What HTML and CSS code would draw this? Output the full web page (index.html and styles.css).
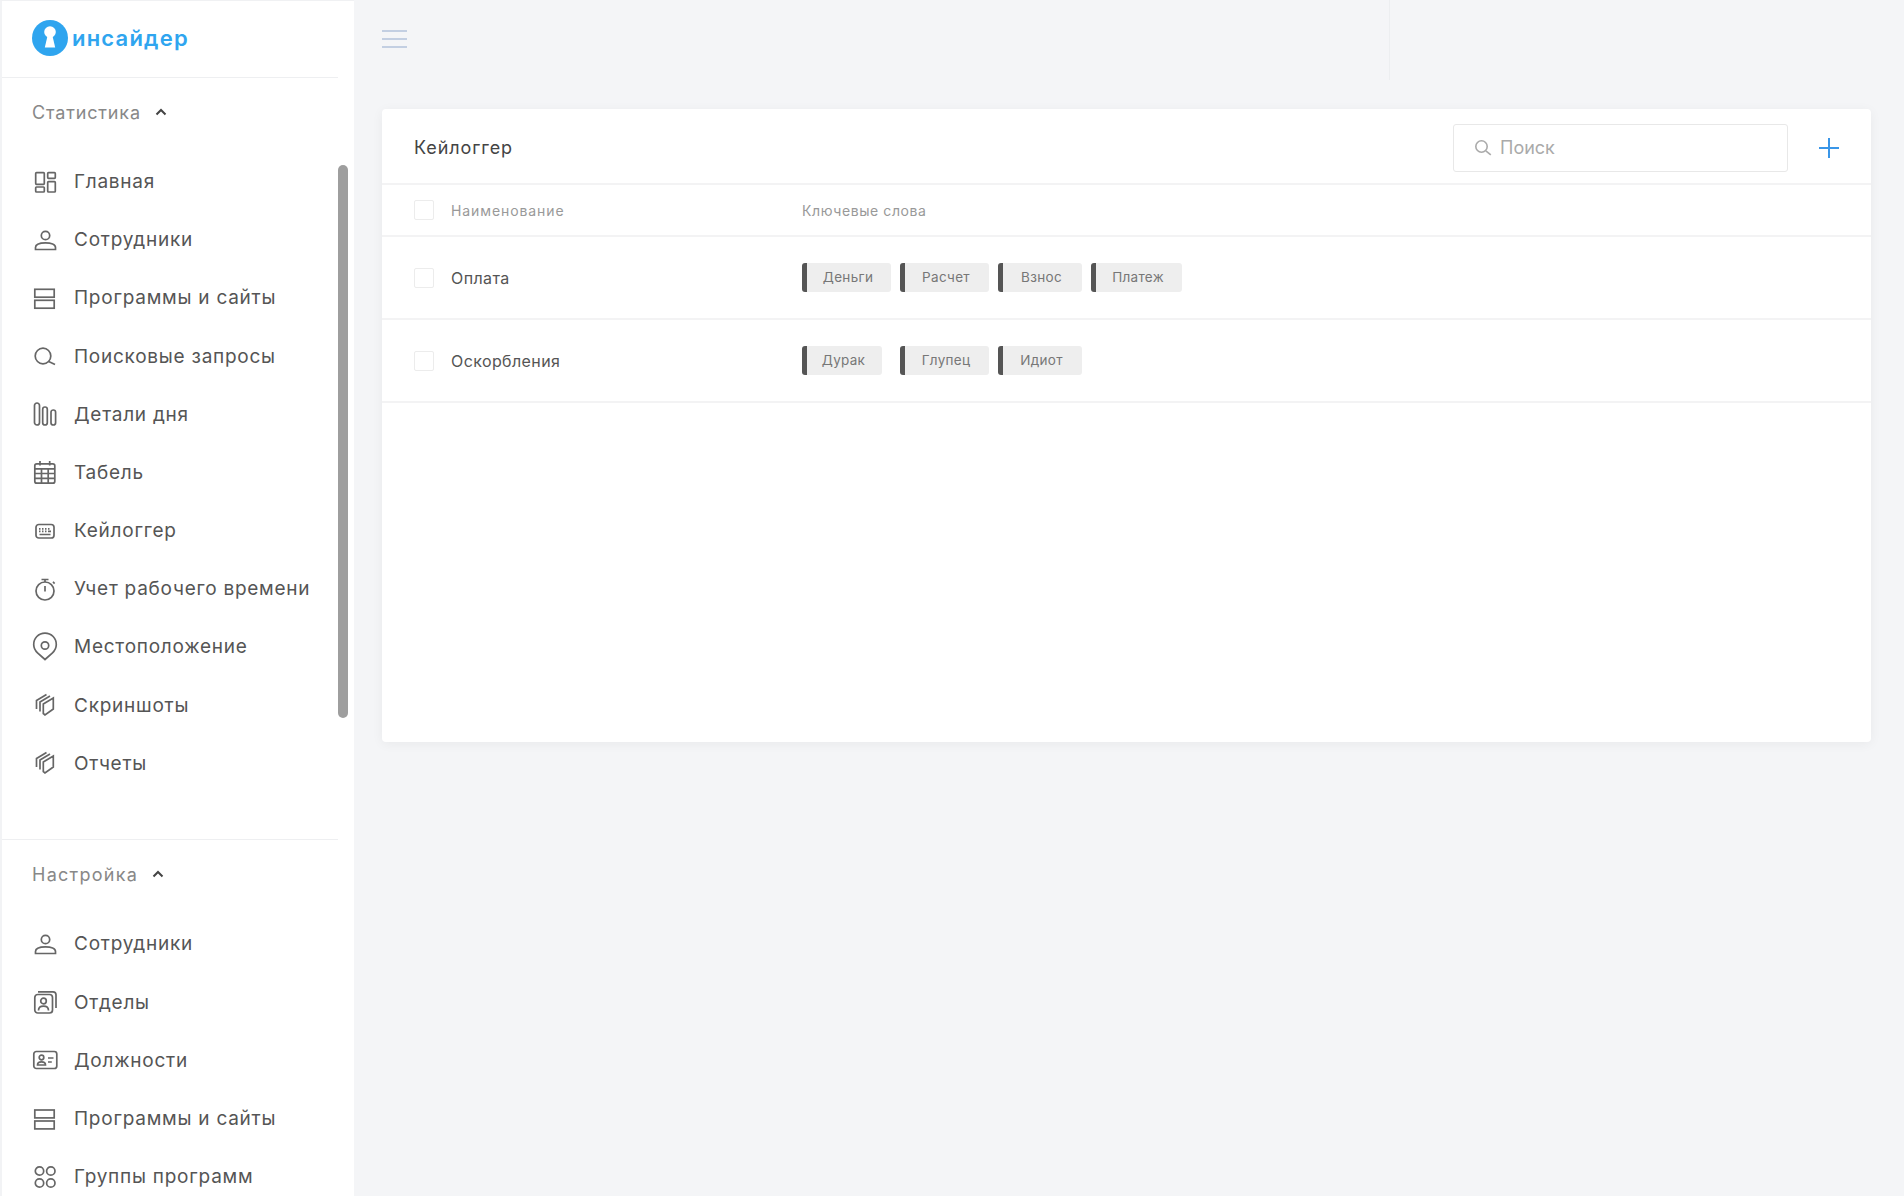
FILE: index.html
```html
<!DOCTYPE html>
<html lang="ru">
<head>
    <meta charset="UTF-8">
    <meta name="viewport" content="width=device-width, initial-scale=1.0">
    <title>Кейлоггер</title>
    <link rel="stylesheet" href="styles.css">
</head>
<body>
    <aside class="sidebar">
        <div class="logo">
            <svg class="logo-mark" width="36" height="36" viewBox="0 0 36 36">
                <circle cx="18" cy="18" r="18" fill="#2fa5ef"/>
                <circle cx="18" cy="12" r="5.800" fill="#fff"/>
                <path d="M15.500 16h5l2.700 11.500H12.800z" fill="#fff"/>
            </svg>
            <span class="logo-text">инсайдер</span>
        </div>

        <div class="section-title">Статистика
            <svg class="chevron" width="12" height="8" viewBox="0 0 12 8"><path d="M1.500 6.500L6 2l4.500 4.500"/></svg>
        </div>
        <nav class="nav">
            <a class="nav-item"><svg class="icon" viewBox="0 0 24 24"><rect x="2.700" y="3.700" width="8.600" height="11.600" rx=".8"/><rect x="14.700" y="3.700" width="7.600" height="5.600" rx=".8"/><rect x="2.700" y="18" width="8.600" height="5" rx=".8"/><rect x="14.700" y="12.700" width="7.600" height="10.300" rx=".8"/></svg>Главная</a>
            <a class="nav-item"><svg class="icon" viewBox="0 0 24 24"><circle cx="12.500" cy="7.500" r="4.200"/><path d="M2.500 21.500v-2c0-3 4.400-4.700 10-4.700s10 1.700 10 4.700v2z"/></svg>Сотрудники</a>
            <a class="nav-item"><svg class="icon" viewBox="0 0 24 24"><rect x="1.800" y="3.300" width="19.400" height="7.900"/><rect x="1.800" y="14.300" width="19.400" height="7.900"/></svg>Программы и сайты</a>
            <a class="nav-item"><svg class="icon" viewBox="0 0 24 24"><circle cx="10" cy="12" r="7.800"/><path d="M15.700 17.500l6.300 3"/></svg>Поисковые запросы</a>
            <a class="nav-item"><svg class="icon" viewBox="0 0 24 24"><rect x="1.500" y="1" width="5" height="22" rx="2.500"/><rect x="9.700" y="5" width="4.600" height="18" rx="2.300"/><rect x="18" y="8" width="4.600" height="15" rx="2.300"/></svg>Детали дня</a>
            <a class="nav-item"><svg class="icon" viewBox="0 0 24 24"><rect x="1.800" y="3.800" width="20" height="19.400" rx="2"/><path d="M1.800 8.800h20M1.800 13.500h20M1.800 18.300h20M8.500 8.800v14.400M15.200 8.800v14.400M7 1v4.500M16.700 1v4.500"/></svg>Табель</a>
            <a class="nav-item"><svg class="icon" viewBox="0 0 24 24"><rect x="3" y="5.500" width="18" height="13.500" rx="2.800"/><path d="M6 9.800h1.500M9 9.800h1.500M12 9.800h1.500M15 9.800h1.500M6 12.300h1.500M9 12.300h1.500M12 12.300h1.500M15 12.300h3M6.500 15.500h11"/></svg>Кейлоггер</a>
            <a class="nav-item"><svg class="icon" viewBox="0 0 24 24"><circle cx="12" cy="14" r="9"/><path d="M8.500 2.500h7M12 2.500v2.500M12 9v5.500M20 4.800l1.600 1.800"/></svg>Учет рабочего времени</a>
            <a class="nav-item"><svg class="icon" viewBox="0 0 24 24"><path d="M12 24.500l-7.500-6.700A11.300 11.300 0 1 1 19.500 17.800z"/><circle cx="12" cy="10.500" r="3.700"/></svg>Местоположение</a>
            <a class="nav-item"><svg class="icon" viewBox="0 0 24 24"><path d="M10.300 11l10-6v11l-8.300 6-1.700-1.500zM7 18.500V9l10-6M3.500 16V7.500L13.500 1.500"/></svg>Скриншоты</a>
            <a class="nav-item"><svg class="icon" viewBox="0 0 24 24"><path d="M10.300 11l10-6v11l-8.300 6-1.700-1.500zM7 18.500V9l10-6M3.500 16V7.500L13.500 1.500"/></svg>Отчеты</a>
        </nav>

        <div class="section-title section-second">Настройка
            <svg class="chevron" width="12" height="8" viewBox="0 0 12 8"><path d="M1.500 6.500L6 2l4.500 4.500"/></svg>
        </div>
        <nav class="nav">
            <a class="nav-item"><svg class="icon" viewBox="0 0 24 24"><circle cx="12.500" cy="7.500" r="4.200"/><path d="M2.500 21.500v-2c0-3 4.400-4.700 10-4.700s10 1.700 10 4.700v2z"/></svg>Сотрудники</a>
            <a class="nav-item"><svg class="icon" viewBox="0 0 24 24"><rect x="1.800" y="4.500" width="17.700" height="18.500" rx="3"/><path d="M5 1.800h15a3 3 0 0 1 3 3V18"/><circle cx="10.500" cy="11" r="2.800"/><path d="M5.500 20.500c0-3 2-4.300 5-4.300s5 1.300 5 4.300"/></svg>Отделы</a>
            <a class="nav-item"><svg class="icon" viewBox="0 0 24 24"><rect x=".8" y="3.500" width="23" height="17" rx="2.500"/><circle cx="8.500" cy="9.500" r="2.300"/><path d="M4.500 17c0-2.500 2-3.200 4-3.200s4 .7 4 3.200zM15 10h5.500M15 14h3.800"/></svg>Должности</a>
            <a class="nav-item"><svg class="icon" viewBox="0 0 24 24"><rect x="1.800" y="3" width="19.400" height="7.900"/><rect x="1.800" y="14" width="19.400" height="7.900"/></svg>Программы и сайты</a>
            <a class="nav-item"><svg class="icon" viewBox="0 0 24 24"><circle cx="6.500" cy="6" r="4.200"/><circle cx="17.800" cy="6" r="4.200"/><circle cx="6.500" cy="18" r="4.200"/><circle cx="17.800" cy="18" r="4.200"/></svg>Группы программ</a>
        </nav>
        <div class="scrollbar"></div>
    </aside>

    <main class="content">
        <header class="topbar">
            <div class="burger"><span></span><span></span><span></span></div>
            <div class="topbar-right"></div>
        </header>

        <section class="card">
            <div class="card-head">
                <h1 class="card-title">Кейлоггер</h1>
                <div class="search">
                    <svg class="search-icon" width="18" height="18" viewBox="0 0 18 18"><circle cx="7.500" cy="7.500" r="5.700"/><path d="M11.800 11.800l5 4"/></svg>
                    <span>Поиск</span>
                </div>
                <svg class="add" width="20" height="20" viewBox="0 0 20 20"><path d="M0 10h20M10 0v20"/></svg>
            </div>

            <div class="row row-head">
                <div class="name-cell"><span class="check"></span>Наименование</div>
                <div class="keys-head">Ключевые слова</div>
            </div>
            <div class="row">
                <div class="name-cell"><span class="check"></span>Оплата</div>
                <div class="tags">
                    <span class="tag tag-l">Деньги</span>
                    <span class="tag tag-l">Расчет</span>
                    <span class="tag tag-m">Взнос</span>
                    <span class="tag tag-xl">Платеж</span>
                </div>
            </div>
            <div class="row">
                <div class="name-cell"><span class="check"></span>Оскорбления</div>
                <div class="tags">
                    <span class="tag tag-s">Дурак</span>
                    <span class="tag tag-l">Глупец</span>
                    <span class="tag tag-m">Идиот</span>
                </div>
            </div>
        </section>
    </main>
</body>
</html>
```

FILE: styles.css
```css
* {
    box-sizing: border-box;
}
html, body {
    height: 100%;
}
body {
    margin: 0;
    display: flex;
    overflow: hidden;
    background: #f4f5f7;
    color: #555;
    font-family: Inter, "Noto Sans", sans-serif;
}

/* sidebar */
.sidebar {
    position: relative;
    flex: 0 0 354px;
    height: 1196px;
    overflow: hidden;
    background: #fff;
    border-top: 1px solid #f0f1f3;
    border-left: 2px solid #f2f3f5;
}
.logo {
    display: flex;
    align-items: center;
    width: 336px;
    height: 77px;
    padding: 0 0 2px 30px;
    border-bottom: 1px solid #eeeff1;
}
.logo-text {
    margin-left: 4px;
    color: #2fa5ef;
    font-size: 22px;
    font-weight: 600;
    letter-spacing: 1.2px;
}
.section-title {
    display: flex;
    align-items: center;
    gap: 14px;
    height: 68px;
    padding-left: 30px;
    color: #888;
    font-size: 18px;
    letter-spacing: .85px;
}
.section-second {
    width: 336px;
    height: 69px;
    margin-top: 47px;
    border-top: 1px solid #eeeff1;
    letter-spacing: 1.25px;
}
.chevron {
    fill: none;
    stroke: #444;
    stroke-width: 2;
}
.nav {
    padding-top: 6.4px;
}
.nav-item {
    display: flex;
    align-items: center;
    gap: 17px;
    height: 58.2px;
    padding-left: 31px;
    color: #555;
    font-size: 19px;
    letter-spacing: .75px;
    white-space: nowrap;
}
.icon {
    flex: none;
    width: 24px;
    height: 24px;
    overflow: visible;
    fill: none;
    stroke: #666;
    stroke-width: 1.7;
}
.scrollbar {
    position: absolute;
    top: 164px;
    left: 336px;
    width: 10px;
    height: 553px;
    border-radius: 5px;
    background: #9e9e9e;
}

/* main area */
.content {
    flex: 1;
    min-width: 0;
    padding: 0 33px 0 28px;
}
.topbar {
    display: flex;
    align-items: center;
    justify-content: space-between;
    height: 80px;
    margin-bottom: 29px;
}
.burger {
    display: flex;
    flex-direction: column;
    gap: 6px;
    width: 25px;
    margin-bottom: 2px;
}
.burger span {
    height: 2px;
    background: #c3cfe2;
}
.topbar-right {
    width: 482px;
    height: 80px;
    border-left: 1px solid #eceef0;
}

.card {
    height: 633px;
    border-radius: 4px;
    background: #fff;
    box-shadow: 0 2px 12px rgba(0, 0, 0, .05);
}
.card-head {
    display: flex;
    align-items: center;
    height: 76px;
    padding: 3px 32px 0;
    border-bottom: 2px solid #f3f3f4;
}
.card-title {
    flex: 1;
    margin: 0;
    color: #444;
    font-size: 18px;
    font-weight: 400;
    letter-spacing: .9px;
}
.search {
    display: flex;
    align-items: center;
    gap: 8px;
    width: 335px;
    height: 48px;
    padding-left: 20px;
    border: 1px solid #e8e8e8;
    border-radius: 3px;
    color: #aaa;
    font-size: 18px;
}
.search-icon {
    fill: none;
    stroke: #aaa;
    stroke-width: 1.6;
}
.add {
    margin-left: 31px;
    fill: none;
    stroke: #3a96e8;
    stroke-width: 2;
}

.row {
    display: grid;
    grid-template-columns: 420px 1fr;
    align-items: center;
    height: 83px;
    border-bottom: 2px solid #f3f3f4;
    color: #555;
    font-size: 16px;
    letter-spacing: .4px;
}
.row-head {
    height: 52px;
    color: #999;
    font-size: 14px;
    letter-spacing: .9px;
}
.keys-head {
    letter-spacing: .6px;
}
.name-cell {
    display: flex;
    align-items: center;
    gap: 17px;
    padding-left: 32px;
}
.check {
    width: 20px;
    height: 20px;
    border: 1px solid #ececec;
    border-radius: 2px;
    background: #fff;
}
.tags {
    display: grid;
    grid-template-columns: 98px 98px 93px auto;
    justify-items: start;
}
.tag {
    height: 29px;
    padding-right: 2px;
    border-left: 5px solid #555;
    border-radius: 3px;
    background: #eee;
    color: #777;
    font-size: 13.5px;
    letter-spacing: .3px;
    line-height: 29px;
    text-align: center;
}
.tag-s { width: 80px; }
.tag-m { width: 84px; }
.tag-l { width: 89px; }
.tag-xl { width: 91px; }
```
